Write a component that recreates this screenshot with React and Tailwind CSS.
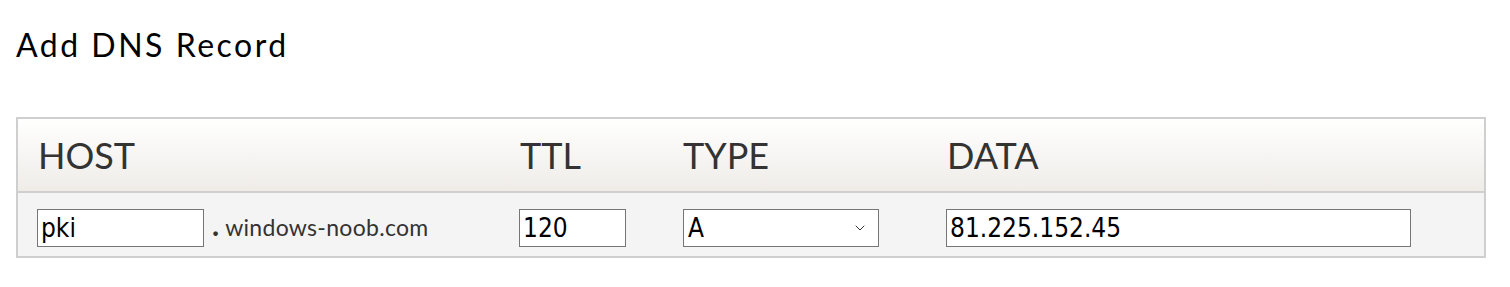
import { ChevronDown } from "lucide-react";

const head = "font-['Lato','Open_Sans',sans-serif] text-[36px] text-[#333] leading-none";
const field = "h-[38px] border border-[#767676] bg-white px-[3px] text-[26px] text-black font-['DejaVu_Sans_Condensed','DejaVu_Sans',sans-serif] outline-none";

export default function App() {
  return (
    <div className="min-h-[287px] bg-white px-4 pt-[27px] font-['Lato',sans-serif]">
      <h1 className="text-[32px] leading-[36px] tracking-[2.5px] text-black font-['Lato',sans-serif]">Add DNS Record</h1>

      <div className="mt-[54px] w-[1470px] border-2 border-[#cfcfcf]">
        <div className="grid grid-cols-[482px_163px_264px_1fr] h-[74px] items-center bg-gradient-to-b from-white to-[#efece8] border-b-2 border-[#cfcfcf]">
          <div className={`pl-5 ${head}`}>HOST</div>
          <div className={`pl-5 ${head}`}>TTL</div>
          <div className={`pl-5 ${head}`}>TYPE</div>
          <div className={`pl-5 ${head}`}>DATA</div>
        </div>
        <div className="grid grid-cols-[482px_163px_264px_1fr] bg-[#f4f4f4] pt-[16px] pb-[9px]">
          <div className="pl-[19px] flex items-center">
            <input defaultValue="pki" className={`${field} w-[167px]`} />
            <div className="flex items-baseline -mt-[8px] text-[#333]">
              <span className="ml-[8px] text-[30px] font-bold leading-none">.</span>
              <span className="ml-[6px] text-[23px] tracking-[0.3px] leading-none">windows-noob.com</span>
            </div>
          </div>
          <div className="pl-[19px]">
            <input defaultValue="120" className={`${field} w-[107px]`} />
          </div>
          <div className="pl-5">
            <div className={`${field} w-[196px] flex items-center justify-between pl-[4px] pr-[10px]`}>
              <span>A</span>
              <ChevronDown className="w-[16px] h-[16px] text-[#333]" strokeWidth={1.5} />
            </div>
          </div>
          <div className="pl-[19px]">
            <input defaultValue="81.225.152.45" className={`${field} w-[465px]`} />
          </div>
        </div>
      </div>
    </div>
  );
}
